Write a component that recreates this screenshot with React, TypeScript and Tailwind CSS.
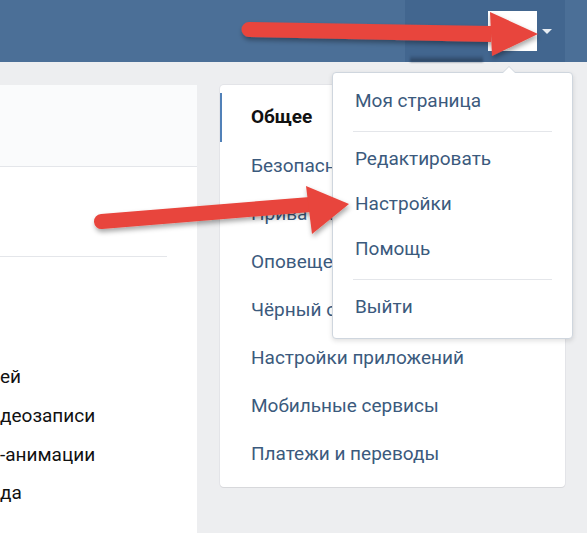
import React from "react";

const font = { fontFamily: "Roboto, 'Open Sans', 'Liberation Sans', sans-serif" };

function Arrows() {
  return (
    <svg className="absolute left-0 top-0 pointer-events-none" width={587} height={533} viewBox="0 0 587 533">
      <defs>
        <filter id="sh" x="-20%" y="-50%" width="140%" height="200%">
          <feDropShadow dx="1" dy="3" stdDeviation="2.5" floodColor="#000" floodOpacity="0.35" />
        </filter>
      </defs>
      <g filter="url(#sh)" fill="#e8453c">
        <path d="M249 22 L491 26 L491 42 L249 37 A7.5 7.5 0 0 1 249 22 Z" />
        <path d="M490 12 L538 34 L492 56 Z" />
        <path d="M101 214 L310 197 L311 212 L102 229 A7.5 7.5 0 0 1 101 214 Z" />
        <path d="M306 186 L349 204 L312 234 Z" />
      </g>
    </svg>
  );
}

export default function App() {
  const settings = [
    "Безопасность",
    "Приватность",
    "Оповещения",
    "Чёрный список",
    "Настройки приложений",
    "Мобильные сервисы",
    "Платежи и переводы",
  ];
  return (
    <div className="relative w-[587px] h-[533px] overflow-hidden bg-[#edeef0]" style={font}>
      {/* header */}
      <div className="flex h-[62px] bg-[#4b6f97]">
        <div className="flex-1" />
        <div className="relative flex w-[160px] items-center bg-[#42668f] pl-[83px]">
          <div className="h-[40px] w-[49px] bg-white" />
          <div className="ml-[5px] h-0 w-0 border-x-[5px] border-t-[5px] border-x-transparent border-t-[#e8edf3]" />
          <div className="absolute bottom-0 left-[5px] h-[7px] w-[73px] bg-gradient-to-b from-[#2f4864]/0 to-[#1f3148]/70 blur-[1px]" />
        </div>
        <div className="w-[22px]" />
      </div>

      {/* main */}
      <div className="flex gap-[23px] pt-[23px]">
        <div className="flex h-[448px] w-[197px] flex-col bg-white text-[19px] text-[#111]">
          <div className="h-[82px] border-b border-[#e4e6ea] bg-[#fafbfc]" />
          <div className="h-[89px]" />
          <div className="h-px w-[167px] bg-[#e4e6ea]" />
          <div className="flex flex-col pt-[101px]">
            <div className="h-[38px] leading-[38px]">ей</div>
            <div className="h-[39px] leading-[39px]">деозаписи</div>
            <div className="h-[39px] leading-[39px]">-анимации</div>
            <div className="h-[38px] leading-[38px]">да</div>
          </div>
        </div>

        <div className="w-[345px]">
          <div className="flex h-[402px] flex-col rounded-[4px] bg-white pt-[8px] shadow-[0_1px_0_0_#d7d8db,0_0_0_1px_#e3e4e8] text-[19px] text-[#3b5a7d]">
            <div className="flex h-[49px] items-center border-l-[2px] border-[#5181b8] pl-[29px] font-bold text-[#111]">
              Общее
            </div>
            {settings.map((s) => (
              <div key={s} className="flex h-[48px] items-center pl-[31px]">
                {s}
              </div>
            ))}
          </div>
        </div>
      </div>

      {/* dropdown */}
      <div className="absolute left-[332px] top-[72px] w-[241px] rounded-[4px] border border-[#cfd6de] bg-white pb-[8px] pt-[6px] text-[19px] text-[#3b5a7d] shadow-[0_2px_5px_rgba(0,0,0,0.12)]">
        <div className="absolute -top-[7px] left-[169px] h-0 w-0 border-x-[7px] border-b-[7px] border-x-transparent border-b-[#cfd6de]" />
        <div className="absolute -top-[6px] left-[170px] h-0 w-0 border-x-[6px] border-b-[6px] border-x-transparent border-b-white" />
        <div className="flex h-[45px] items-center pl-[22px]">Моя страница</div>
        <div className="mx-[20px] mb-[5px] mt-[7px] h-px bg-[#e4e6ea]" />
        <div className="flex h-[45px] items-center pl-[22px]">Редактировать</div>
        <div className="flex h-[45px] items-center pl-[22px]">Настройки</div>
        <div className="flex h-[45px] items-center pl-[22px]">Помощь</div>
        <div className="mx-[20px] mb-[5px] mt-[7px] h-px bg-[#e4e6ea]" />
        <div className="flex h-[45px] items-center pl-[22px]">Выйти</div>
      </div>

      <Arrows />
    </div>
  );
}
